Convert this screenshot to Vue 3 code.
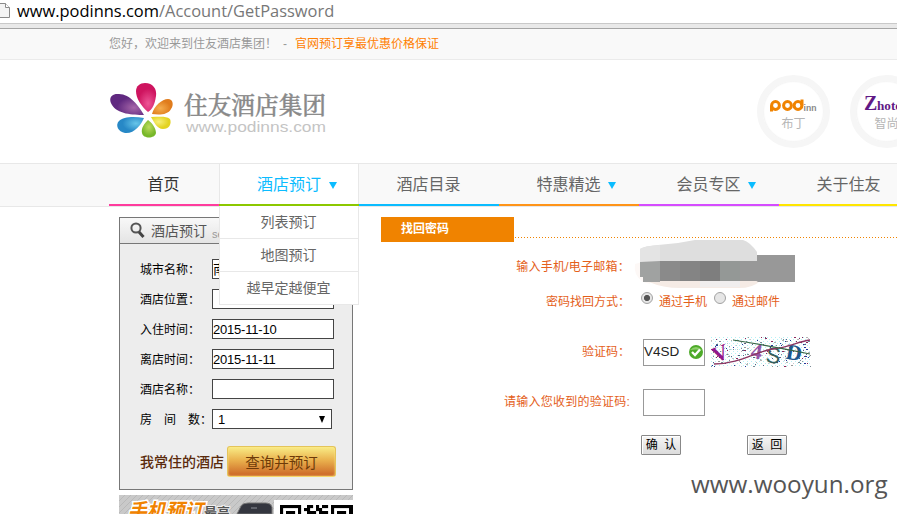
<script setup>
const navItems = [
  { label: '首页', color: '#ff3c9e', kind: 'home' },
  { label: '酒店预订', color: '#8cc800', kind: 'active', arrow: true },
  { label: '酒店目录', color: '#0bbcff', kind: '' },
  { label: '特惠精选', color: '#ff9418', kind: '', arrow: true },
  { label: '会员专区', color: '#d54cff', kind: '', arrow: true },
  { label: '关于住友', color: '#ffe600', kind: '' },
]
const submenu = ['列表预订', '地图预订', '越早定越便宜']
const fields = [
  { label: '城市名称：', value: '南京' },
  { label: '酒店位置：', value: '' },
  { label: '入住时间：', value: '2015-11-10' },
  { label: '离店时间：', value: '2015-11-11' },
  { label: '酒店名称：', value: '' },
]

// Deterministic speckles for the verification image
let seed = 77
const rand = () => {
  seed = (seed * 16807) % 2147483647
  return seed / 2147483647
}
const inks = ['#7c8a94', '#5a5f80', '#b4b4b4', '#8a2a5c', '#223a9a', '#999', '#c2c8cc']
const specks = Array.from({ length: 210 }, () => ({
  x: Math.floor(rand() * 100),
  y: Math.floor(rand() * 30),
  w: rand() > 0.75 ? 2 : 1,
  c: inks[Math.floor(rand() * inks.length)],
}))

const qrRows = [
  '1111111001101011011111111',
  '1000001011001100010000011',
  '1011101001110111010111011',
  '1011101010101100010111011',
]
const qr = qrRows.flatMap((r, y) => [...r].map((v, x) => ({ x, y, v })).filter((c) => c.v === '1'))
</script>

<template>
  <div class="page">
    <div class="address">
      <svg class="doc" width="11" height="18" viewBox="0 0 11 18">
        <path d="M-4 2.500H5.500L9.500 6.500V16.500H-4Z" fill="#f4f4f4" stroke="#8a8a8a" />
        <path d="M5.500 2.500V6.500H9.500" fill="#fff" stroke="#8a8a8a" />
      </svg>
      <div class="url"><b>www.podinns.com</b>/Account/GetPassword</div>
    </div>
    <div class="chrome-edge"></div>

    <div class="topbar">
      <span class="hello">您好，欢迎来到住友酒店集团！</span><span class="dash">-</span><span class="promise">官网预订享最优惠价格保证</span>
    </div>

    <header class="header">
      <svg class="logo" width="222" height="62" viewBox="0 0 222 62">
        <defs>
          <radialGradient id="pu" cx=".7" cy=".65"><stop offset="0" stop-color="#a767a9" /><stop offset="1" stop-color="#602980" /></radialGradient>
          <radialGradient id="pk" cx=".6" cy=".7"><stop offset="0" stop-color="#ee5596" /><stop offset="1" stop-color="#ce145f" /></radialGradient>
          <radialGradient id="or" cx=".4" cy=".6"><stop offset="0" stop-color="#f5ae4e" /><stop offset="1" stop-color="#e07c1c" /></radialGradient>
          <radialGradient id="bl" cx=".7" cy=".4"><stop offset="0" stop-color="#66c5e9" /><stop offset="1" stop-color="#2788c6" /></radialGradient>
          <radialGradient id="gr" cx=".5" cy=".4"><stop offset="0" stop-color="#bddb5d" /><stop offset="1" stop-color="#78b82a" /></radialGradient>
          <radialGradient id="ye" cx=".4" cy=".4"><stop offset="0" stop-color="#f8f07a" /><stop offset="1" stop-color="#e3d321" /></radialGradient>
        </defs>
        <path d="M35 36C30 27 21 15 10 15C2 14 -1 20 3 26C8 35 24 36 35 36Z" fill="url(#pu)" />
        <path d="M39 33C32 27 27 19 27 12C27 7 31 4 36 4C44 4 48 10 47 17C46 24 44 30 39 33Z" fill="url(#pk)" />
        <path d="M43 35C45 27 53 20 59 20C64 20 65 26 62 30C59 36 50 36 43 35Z" fill="url(#or)" />
        <path d="M35 39C24 37 14 38 10 42C6 46 9 53 16 54C25 55 32 46 35 39Z" fill="url(#bl)" />
        <path d="M39 41C35 45 32 49 33 54C34 60 46 60 47 54C47 49 43 44 39 41Z" fill="url(#gr)" />
        <path d="M42 38C51 38 57 37 61 40C63 45 60 50 54 50C48 50 45 43 42 38Z" fill="url(#ye)" />
        <text x="75" y="35" class="logo-name" textLength="142" lengthAdjust="spacingAndGlyphs">住友酒店集团</text>
        <text x="77" y="52.500" class="logo-url" textLength="140" lengthAdjust="spacingAndGlyphs">www.podinns.com</text>
      </svg>
      <div class="brands">
        <div class="brand">
          <svg width="60" height="24" viewBox="0 0 60 24">
            <g fill="none" stroke="#f08300" stroke-width="3">
              <circle cx="11.500" cy="13.500" r="3.900" /><path d="M7.500 13.500V19.500" />
              <circle cx="23.500" cy="13.500" r="3.900" />
              <circle cx="34" cy="13.500" r="3.900" /><path d="M38 13.500V7.500" />
            </g>
            <text x="39.500" y="18.500" class="inn" textLength="13" lengthAdjust="spacingAndGlyphs">inn</text>
          </svg>
          <span>布丁</span>
        </div>
        <div class="brand">
          <svg width="60" height="24" viewBox="0 0 60 24">
            <text x="7" y="18" class="zee">Z</text>
            <text x="20" y="18" class="zhotel" textLength="33" lengthAdjust="spacingAndGlyphs">hotels</text>
          </svg>
          <span>智尚</span>
        </div>
      </div>
    </header>

    <nav class="nav">
      <div v-for="n in navItems" :key="n.label" class="nav-item" :class="n.kind" :style="{ borderBottomColor: n.color }">
        {{ n.label }}
        <svg v-if="n.arrow" class="arrow" width="8" height="7" viewBox="0 0 8 7"><path d="M0 0H8L4 7Z" fill="#0bbcff" /></svg>
        <div v-if="n.kind === 'active'" class="submenu">
          <div v-for="s in submenu" :key="s">{{ s }}</div>
        </div>
      </div>
    </nav>

    <main class="content">
      <aside class="side">
        <section class="booking">
          <h3>
            <svg width="16" height="17" viewBox="0 0 16 17"><circle cx="6" cy="6" r="4.600" fill="none" stroke="#555" stroke-width="2" /><path d="M9 10L13.500 15" stroke="#444" stroke-width="3" /></svg>
            <span>酒店预订</span><small>search</small>
          </h3>
          <div class="fields">
            <label v-for="f in fields" :key="f.label"><span>{{ f.label }}</span><i>{{ f.value }}</i></label>
            <label><span class="rooms"><em>房</em><em>间</em><em>数：</em></span><i class="select">1<svg width="6" height="7" viewBox="0 0 6 7"><path d="M0 0H6L3 7Z" /></svg></i></label>
          </div>
          <div class="actions"><span>我常住的酒店</span><button>查询并预订</button></div>
        </section>
        <div class="banner">
          <svg width="234" height="19" viewBox="0 0 234 19">
            <defs><pattern id="hatch" width="6" height="6" patternUnits="userSpaceOnUse"><rect width="6" height="6" fill="#c9c9c9" /><path d="M-1 7L7 -1" stroke="#b9b9b9" /></pattern></defs>
            <rect width="234" height="19" fill="url(#hatch)" />
            <text x="9" y="23" class="mobile" textLength="75" lengthAdjust="spacingAndGlyphs">手机预订</text>
            <text x="85" y="22" class="best">最高</text>
            <path d="M118 19L122 11Q124 8 129 8H147Q152 8 153 12V19Z" fill="#34363f" stroke="#777" />
            <path d="M132 13H138" stroke="#8b8f98" />
            <rect x="155" y="5" width="79" height="14" fill="#fff" />
            <rect v-for="(c, k) in qr" :key="k" :x="161 + c.x * 3" :y="10 + c.y * 3" width="3.100" height="3.100" fill="#000" />
          </svg>
        </div>
      </aside>

      <section class="recover">
        <div class="title-row"><h2>找回密码</h2><div class="dots"></div></div>
        <div class="form">
          <div class="row first">
            <span class="lab wide">输入手机/电子邮箱：</span>
            <svg class="masked" width="172" height="50" viewBox="0 0 172 50">
              <path d="M5 24Q3 35 13 42L20 44V20Z" fill="#fdf8f6" />
              <path d="M10 32L19 42Q33 48 50 48H105Q122 49 130 41L120 34Z" fill="#f5ebe5" />
              <rect x="13" y="15" width="152" height="27" fill="#989898" />
              <rect x="10" y="21" width="20" height="16" fill="#a0a2a1" />
              <rect x="13" y="34" width="17" height="8" fill="#a0a2a1" />
              <rect x="30" y="21" width="20" height="21" fill="#8a8a8a" />
              <rect x="50" y="21" width="20" height="21" fill="#848484" />
              <rect x="70" y="21" width="20" height="21" fill="#7e7e7e" />
              <rect x="90" y="21" width="20" height="21" fill="#949896" />
              <path d="M10 22V9Q14 6 28 5L48 3L65 0H113Q120 2 127 12V21H10Z" fill="#dedede" />
              <path d="M10 22V9Q14 6 30 5V21Z" fill="#e4e4e4" />
              <path d="M30 41H128L122 45Q112 48 100 47H50L30 45Z" fill="#f5ebe5" />
              <path d="M70 41H110V47H70Z" fill="#f0eeee" />
            </svg>
          </div>
          <div class="row second">
            <span class="lab">密码找回方式：</span>
            <span class="choice"><i class="radio on"></i>通过手机</span>
            <span class="choice"><i class="radio"></i>通过邮件</span>
          </div>
          <div class="row">
            <span class="lab">验证码：</span>
            <div class="box">V4SD
              <svg width="16" height="16" viewBox="0 0 16 16"><circle cx="8" cy="8" r="7" fill="#4daa29" /><path d="M2 6Q8 0 14 6Q8 5 2 6Z" fill="#8ed06b" /><path d="M4 8L7 11L12 5.500" fill="none" stroke="#fff" stroke-width="2.300" /></svg>
            </div>
            <svg class="captcha" width="100" height="30" viewBox="0 0 100 30">
              <defs><pattern id="mesh" width="4" height="4" patternUnits="userSpaceOnUse"><rect width="4" height="4" fill="#fff" /><path d="M0 0h1v1h-1zM2 2h1v1h-1z" fill="#b4f1f5" /></pattern></defs>
              <rect width="100" height="30" fill="url(#mesh)" />
              <rect v-for="(s, k) in specks" :key="k" :x="s.x" :y="s.y" :width="s.w" height="1" :fill="s.c" />
              <text x="1" y="24" class="cap" fill="#92178b" transform="rotate(-22 8 16)">V</text>
              <text x="40" y="22" class="cap" fill="#9654a5" transform="rotate(10 46 16)">4</text>
              <text x="55" y="26" class="cap plain" fill="#345f5d" transform="rotate(8 61 18)">S</text>
              <text x="75" y="23" class="cap" fill="#1d568b" transform="rotate(10 83 16)">D</text>
              <path d="M3 27C28 27 46 14 62 12S86 5 99 3" fill="none" stroke="#8c3561" stroke-width="1.300" />
              <path d="M22 3Q60 9 99 17" fill="none" stroke="#386544" stroke-width="1.200" />
            </svg>
          </div>
          <div class="row">
            <span class="lab wide">请输入您收到的验证码:</span>
            <div class="box"></div>
          </div>
          <div class="buttons"><button>确&nbsp;&nbsp;认</button><button>返&nbsp;&nbsp;回</button></div>
        </div>
      </section>
    </main>
    <div class="watermark">www.wooyun.org</div>
  </div>
</template>

<style>
body { margin: 0; overflow: hidden; background: #fff; }
</style>

<style scoped>
* { box-sizing: border-box; }
.page { position: relative; width: 897px; height: 514px; overflow: hidden; background: #fff; font: 12px/18px "Liberation Sans", "Noto Sans CJK SC", sans-serif; color: #000; }
.address { height: 23px; display: flex; }
.doc { margin-top: 1px; flex: none; }
.url { margin-left: 6px; font: 16.450px/22px "Open Sans", sans-serif; color: #777; white-space: nowrap; }
.url b { font-weight: 400; color: #000; }
.chrome-edge { height: 6px; background: #e9e9e9; border-top: 1px solid #c9c9c9; border-bottom: 1px solid #a5a5a5; }
.topbar { height: 31px; padding-left: 109px; display: flex; line-height: 31px; background: #f9f9f9; border-bottom: 1px solid #ebebeb; color: #999; white-space: nowrap; }
.hello { width: 174px; }
.dash { width: 12px; }
.promise { color: #ff8000; }
.header { height: 103px; padding-left: 109px; display: flex; }
.logo { margin-top: 19px; flex: none; }
.logo-name { font: 700 24px "Noto Serif CJK SC", "Noto Sans CJK SC", serif; font-weight: 500; fill: #898989; stroke: #898989; stroke-width: .4px; }
.logo-url { font: 15.500px "Liberation Sans", sans-serif; fill: #c4c4c4; }
.brands { margin: 15px 0 0 426px; display: flex; gap: 20px; flex: none; }
.brand { width: 73px; height: 73px; flex: none; border: 6px solid #f6f6f6; border-radius: 50%; box-shadow: inset 0 0 2px #ddd; display: flex; flex-direction: column; align-items: center; padding-top: 11px; color: #b5b5b5; }
.brand span { line-height: 16px; }
.brand svg { flex: none; }
.inn { font: 700 9px "Liberation Sans", sans-serif; fill: #898989; }
.zee { font: 700 20px "Liberation Serif", serif; fill: #601986; }
.zhotel { font: 700 13px "Liberation Serif", serif; fill: #601986; }
.nav { height: 44px; padding-left: 109px; display: flex; background: #f9f9f9; border-top: 1px solid #e8e8e8; border-bottom: 1px solid #e8e8e8; }
.nav-item { position: relative; flex: none; width: 140px; height: 42px; padding-left: 37.500px; border-bottom: 2px solid; font-size: 16px; line-height: 41px; color: #666; white-space: nowrap; }
.nav-item.home { width: 110px; padding-left: 38.500px; color: #333; }
.nav-item.active { background: #fff; color: #0bbcff; box-shadow: inset 1px 0 #e8e8e8, inset -1px 0 #e8e8e8; padding-left: 38px; }
.arrow { margin-left: 3.500px; vertical-align: 1.500px; }
.submenu { position: absolute; z-index: 5; left: 0; top: 42px; width: 140px; background: #fff; border: 1px solid #e8e8e8; border-top: 0; }
.submenu div { height: 33px; line-height: 32px; text-align: center; font-size: 14px; color: #666; border-bottom: 1px solid #e8e8e8; padding-right: 1px; }
.submenu div:last-child { border-bottom: 0; height: 32px; line-height: 33px; }
.content { display: flex; padding: 10px 0 0 119px; }
.side { width: 234px; flex: none; }
.booking { height: 273px; background: #ededed; border: 1px solid #777; }
h3 { margin: 0; height: 26px; display: flex; align-items: center; padding-left: 10px; font-weight: 400; background: linear-gradient(#f8f8f8, #e4e4e4); border-bottom: 1px solid #777; color: #555; }
h3 span { margin-left: 5px; font-size: 14px; line-height: 26px; }
h3 small { margin-left: 5px; padding-top: 6px; font-size: 11px; color: #999; }
.fields { padding: 15px 0 0 20px; display: grid; gap: 10px; }
.fields label { display: flex; height: 20px; }
.fields span { width: 72px; line-height: 22px; }
.fields i { width: 122px; height: 20px; border: 1px solid #444; background: #fff; font-style: normal; font-size: 13px; letter-spacing: -.2px; line-height: 19px; overflow: hidden; }
.fields .rooms { display: flex; gap: 12px; white-space: nowrap; }
.rooms em { font-style: normal; }
.fields .select { width: 120px; padding: 0 6px 0 5px; display: flex; justify-content: space-between; align-items: center; }
.actions { margin-top: 17px; padding-left: 20px; display: flex; align-items: center; }
.actions span { width: 87px; font-size: 14px; color: #5a2a0c; font-weight: 500; white-space: nowrap; }
.actions button { width: 109px; height: 31px; padding: 0; border: 1px solid #e4c45a; border-bottom-color: #f4d568; border-radius: 3px; background: linear-gradient(#f9ec86, #eab24e 45%, #cb6425); box-shadow: inset 0 0 2px #ffe88a; color: #6d3a08; font: 14.500px "Noto Sans CJK SC", sans-serif; line-height: 29px; }
.banner { margin-top: 5px; height: 19px; }
.banner svg { display: block; }
.mobile { font: italic 700 20px "Noto Sans CJK SC", sans-serif; fill: #f08300; stroke: #fff; stroke-width: 3px; paint-order: stroke; }
.best { font: 700 13px "Noto Sans CJK SC", sans-serif; fill: #555; stroke: #eee; stroke-width: 2px; paint-order: stroke; }
.recover { margin-left: 28px; width: 516px; flex: none; }
.title-row { display: flex; height: 25px; }
h2 { margin: 0; width: 133px; padding-left: 20px; background: #f08300; color: #fff; font: 700 12px/22px "Noto Sans CJK SC", sans-serif; }
.dots { flex: 1; margin-left: 1px; height: 21px; background: repeating-linear-gradient(90deg, #f08300 0 1px, transparent 1px 3px) bottom / 100% 1px no-repeat; }
.form { padding-top: 1px; color: #e4601a; }
.row { display: flex; height: 50px; align-items: center; }
.row.first { height: 48px; align-items: flex-start; }
.row.second { height: 36px; }
.lab { width: 249px; flex: none; text-align: right; white-space: nowrap; }
.lab.wide { letter-spacing: .25px; }
.first .lab { margin-top: 15px; }
.masked { margin-top: -3px; flex: none; }
.second { align-items: flex-start; }
.second .lab { padding-top: 2px; }
.choice { display: flex; margin-left: 11px; width: 62px; line-height: 22px; white-space: nowrap; }
.radio { width: 12px; height: 12px; margin: 1px 6px 0 0; flex: none; border: 1px solid #a2a2a2; border-radius: 50%; background: #e6e6e6; }
.radio.on { background: radial-gradient(circle, #555 0 2.700px, #e6e6e6 3.500px); }
.box { margin-left: 13px; width: 62px; height: 27px; flex: none; border: 1px solid #999; display: flex; align-items: center; justify-content: space-between; color: #222; font-size: 13.500px; }
.captcha { margin-left: 6px; }
.cap { font: 700 22px "Liberation Serif", serif; }
.cap.plain { font-family: "Liberation Sans", sans-serif; font-weight: 400; }
.buttons { margin-left: 260px; padding-top: 8px; display: flex; gap: 66px; }
.buttons button { width: 40px; height: 20px; padding: 0; border: 1px solid #888; border-radius: 1px; box-shadow: inset 1px 1px #fff; background: linear-gradient(#f6f6f6, #dcdcdc); font: 12px/16px "Liberation Sans", "Noto Sans CJK SC", sans-serif; color: #000; }
.watermark { position: absolute; left: 691px; top: 466px; font: 24.250px/36px "Open Sans", sans-serif; color: #555; white-space: nowrap; }
</style>
